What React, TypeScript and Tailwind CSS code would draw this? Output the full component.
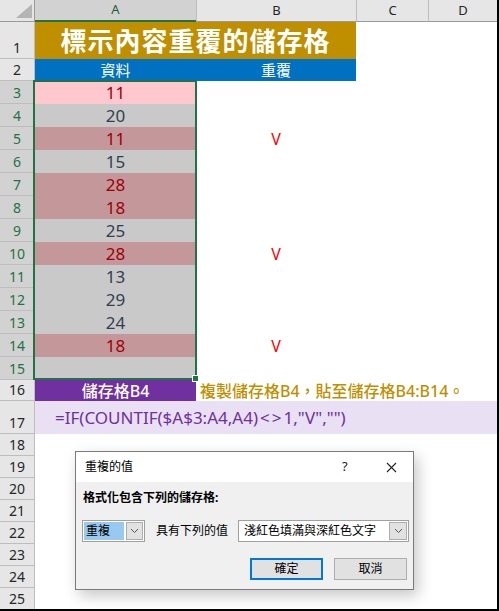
const data = [
  { v: "11", t: "light" },
  { v: "20" },
  { v: "11", t: "dup", mark: true },
  { v: "15" },
  { v: "28", t: "dup" },
  { v: "18", t: "dup" },
  { v: "25" },
  { v: "28", t: "dup", mark: true },
  { v: "13" },
  { v: "29" },
  { v: "24" },
  { v: "18", t: "dup", mark: true },
  { v: "" },
];

function RowHead({ n, sel }: { n: number; sel?: boolean }) {
  return (
    <div
      className={`w-[35px] shrink-0 flex items-end justify-center pb-[1px] border-r border-b border-[#bdbdbd] text-[14px] leading-[18px] ${
        sel ? "bg-[#d2d2d2] text-[#217346]" : "bg-[#e6e6e6] text-[#262626]"
      }`}
    >
      {n}
    </div>
  );
}

function Chevron() {
  return (
    <svg width="9" height="6" viewBox="0 0 9 6">
      <polyline points="1,1 4.5,4.5 8,1" fill="none" stroke="#555" strokeWidth="1" />
    </svg>
  );
}

export default function App() {
  return (
    <div className="relative w-[499px] h-[611px] overflow-hidden bg-white border-r-2 border-b-2 border-black font-['Noto_Sans','Noto_Sans_CJK_TC',sans-serif]">
      {/* column headers */}
      <div className="flex h-[22px] text-[13px] text-[#262626]">
        <div className="w-[35px] shrink-0 bg-[#e6e6e6] border-r border-b border-[#9b9b9b] flex items-end justify-end pr-[2px] pb-[3px]">
          <svg width="16" height="14" viewBox="0 0 16 14">
            <polygon points="16,0 16,14 0,14" fill="#b4b4b4" />
          </svg>
        </div>
        <div className="w-[161px] shrink-0 bg-[#d2d2d2] text-[#1d5e3a] border-b-2 border-[#217346] flex items-center justify-center">
          A
        </div>
        <div className="w-[160px] shrink-0 bg-[#e6e6e6] border-l border-b border-[#bdbdbd] border-b-[#9b9b9b] flex items-center justify-center">
          B
        </div>
        <div className="w-[72px] shrink-0 bg-[#e6e6e6] border-l border-b border-[#bdbdbd] border-b-[#9b9b9b] flex items-center justify-center">
          C
        </div>
        <div className="w-[69px] shrink-0 bg-[#e6e6e6] border-l border-b border-[#bdbdbd] border-b-[#9b9b9b] flex items-center justify-center">
          D
        </div>
      </div>

      {/* row 1 */}
      <div className="flex h-[37px]">
        <RowHead n={1} />
        <div className="w-[321px] shrink-0 bg-[#bf8f00] text-white font-bold text-[26px] tracking-[1px] flex items-center justify-center leading-none">
          標示內容重覆的儲存格
        </div>
      </div>

      {/* row 2 */}
      <div className="flex h-[22px]">
        <RowHead n={2} />
        <div className="w-[161px] shrink-0 bg-[#0070c0] text-white text-[15px] flex items-center justify-center">資料</div>
        <div className="w-[160px] shrink-0 bg-[#0070c0] text-white text-[15px] flex items-center justify-center">重覆</div>
      </div>

      {/* rows 3-15 */}
      {data.map((d, i) => (
        <div key={i} className="flex h-[23px]">
          <RowHead n={i + 3} sel />
          <div
            className={`w-[161px] shrink-0 flex items-center justify-center text-[17px] ${
              d.t === "light"
                ? "bg-[#ffc7ce] text-[#9c0006]"
                : d.t === "dup"
                  ? "bg-[#c4979b] text-[#9c0006]"
                  : "bg-[#c9c9c9] text-[#333f50]"
            }`}
          >
            {d.v}
          </div>
          <div className="w-[160px] shrink-0 flex items-center justify-center text-[16px] text-[#ff0000]">
            {d.mark ? "V" : ""}
          </div>
        </div>
      ))}

      {/* row 16 */}
      <div className="flex h-[21px]">
        <RowHead n={16} />
        <div className="w-[161px] shrink-0 bg-[#7030a0] text-white text-[16px] font-medium flex items-center justify-center">
          儲存格B4
        </div>
        <div className="pl-[4px] flex items-center whitespace-nowrap text-[16px] font-medium text-[#bf8f00]">
          複製儲存格B4，貼至儲存格B4:B14。
        </div>
      </div>

      {/* row 17 */}
      <div className="flex h-[33px]">
        <RowHead n={17} />
        <div className="flex-1 bg-[#e9e0f3] text-[#7030a0] text-[17px] flex items-center pl-[20px] whitespace-nowrap">
          =IF(COUNTIF($A$3:A4,A4)<span className="mx-[2px]">&lt;</span>
          <span className="mr-[2px]">&gt;</span>1,"V","")
        </div>
      </div>

      {/* rows 18-25 */}
      {[18, 19, 20, 21, 22, 23, 24, 25].map((n) => (
        <div key={n} className="flex h-[22px]">
          <RowHead n={n} />
        </div>
      ))}

      {/* selection border */}
      <div className="absolute left-[33px] top-[80px] w-[164px] h-[300px] border-2 border-[#217346]" />
      <div className="absolute left-[192px] top-[375px] w-[7px] h-[7px] bg-[#217346] border border-white" />

      {/* dialog */}
      <div className="absolute left-[75px] top-[451px] w-[339px] h-[139px] bg-[#f0f0f0] border border-[#7a7a7a] shadow-[4px_6px_14px_rgba(0,0,0,0.22)] flex flex-col text-[12px] text-black">
        <div className="h-[30px] bg-white flex items-center pl-[9px]">
          <span className="flex-1">重複的值</span>
          <span className="w-[10px] text-[13px] text-[#222] mr-[34px]">?</span>
          <svg width="11" height="11" viewBox="0 0 11 11" className="mr-[16px]">
            <path d="M1 1L10 10M10 1L1 10" stroke="#222" strokeWidth="1.1" />
          </svg>
        </div>
        <div className="pl-[7px] pt-[7px] font-bold h-[24px] flex items-center">格式化包含下列的儲存格:</div>
        <div className="flex items-center mt-[14px] pl-[6px]">
          <div className="w-[63px] h-[22px] bg-white border border-[#a0a0a0] flex items-center p-[1px]">
            <div className="w-[40px] h-[18px] bg-[#99c9ef] pl-[2px] flex items-center">重複</div>
            <div className="ml-[2px] w-[17px] h-[18px] bg-[#e1e1e1] border border-[#adadad] flex items-center justify-center">
              <Chevron />
            </div>
          </div>
          <span className="ml-[11px]">具有下列的值</span>
          <div className="ml-[10px] w-[171px] h-[22px] bg-white border border-[#a0a0a0] flex items-center p-[1px]">
            <span className="flex-1 pl-[4px]">淺紅色填滿與深紅色文字</span>
            <div className="w-[18px] h-[18px] bg-[#e1e1e1] border border-[#adadad] flex items-center justify-center">
              <Chevron />
            </div>
          </div>
        </div>
        <div className="flex justify-end gap-[11px] mt-[16px] pr-[6px]">
          <button className="w-[73px] h-[22px] bg-[#e1e1e1] border-2 border-[#0078d7] flex items-center justify-center">確定</button>
          <button className="w-[73px] h-[22px] bg-[#e1e1e1] border border-[#adadad] flex items-center justify-center">取消</button>
        </div>
      </div>
    </div>
  );
}
